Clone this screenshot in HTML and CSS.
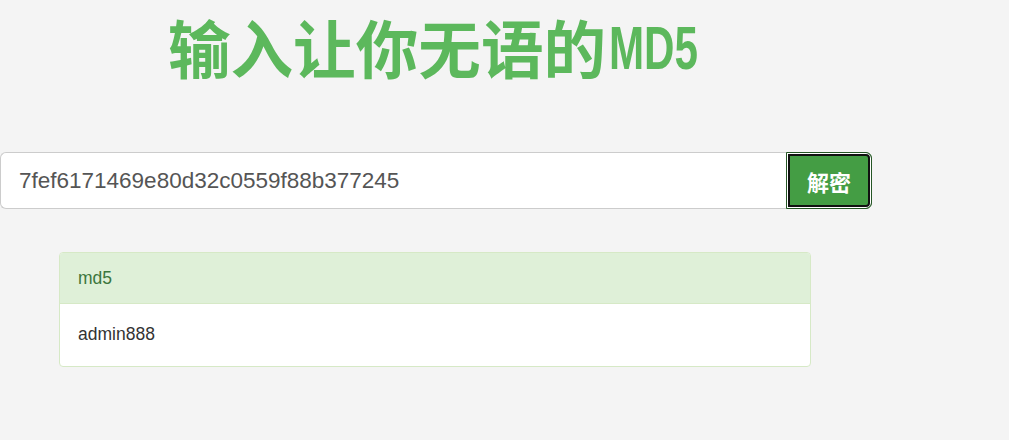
FILE: index.html
```html
<!DOCTYPE html>
<html lang="zh-CN">
<head>
<meta charset="utf-8">
<title>输入让你无语的MD5</title>
<link rel="stylesheet" href="styles.css">
</head>
<body>
<div class="container">
  <h1 class="title">输入让你无语的<svg class="latin" width="90" height="50" viewBox="0 0 90 50"><text x="0" y="48" textLength="89" lengthAdjust="spacingAndGlyphs">MD5</text></svg></h1>
  <form class="search">
    <input class="search-input" type="text" value="7fef6171469e80d32c0559f88b377245">
    <button class="search-btn" type="button">解密</button>
  </form>
  <div class="panel">
    <div class="panel-heading">md5</div>
    <div class="panel-body">admin888</div>
  </div>
</div>
</body>
</html>
```
FILE: styles.css
```css
html, body {
  margin: 0;
  padding: 0;
  background: #f4f4f4;
  font-family: "Liberation Sans", Arial, "Noto Sans CJK SC", sans-serif;
  color: #333;
}
.container {
  width: 872px;
}
.title {
  margin: 0;
  padding: 0 5px 0 0;
  height: 152px;
  box-sizing: border-box;
  text-align: center;
  font-family: "Noto Sans CJK SC", sans-serif;
  font-weight: 700;
  font-size: 62.6px;
  line-height: 91px;
  color: #5cb85c;
}
.title .latin {
  margin-left: 3px;
  vertical-align: 2px;
  overflow: visible;
}
.title .latin text {
  font-family: "Liberation Sans", Arial, sans-serif;
  font-weight: 700;
  font-size: 61px;
  fill: #5cb85c;
}
.search {
  display: flex;
  margin: 0;
  height: 57px;
}
.search-input {
  flex: 1;
  margin: 0;
  height: 57px;
  box-sizing: border-box;
  border: 1px solid #ccc;
  border-right: none;
  border-radius: 6px 0 0 6px;
  background: #fff;
  padding: 0 18px;
  font-family: "Liberation Sans", Arial, sans-serif;
  font-size: 22.5px;
  color: #555;
  outline: none;
}
.search-btn {
  width: 86px;
  height: 57px;
  margin: 0;
  box-sizing: border-box;
  border: 1px solid #255625;
  border-radius: 0 6px 6px 0;
  background: #449d44;
  box-shadow: inset 0 0 0 1px #fff, inset 0 0 0 3px #111;
  color: #fff;
  font-family: "Noto Sans CJK SC", sans-serif;
  font-weight: 700;
  font-size: 22px;
  padding: 0;
  cursor: pointer;
}
.panel {
  margin: 43px 0 0 59px;
  width: 752px;
  box-sizing: border-box;
  border: 1px solid #d6e9c6;
  border-radius: 4px;
  background: #fff;
  overflow: hidden;
  font-size: 17.5px;
}
.panel-heading {
  background: #dff0d8;
  color: #3c763d;
  padding: 13px 18px 12px;
  line-height: 25px;
  border-bottom: 1px solid #d6e9c6;
}
.panel-body {
  padding: 18px 18px 19px;
  line-height: 25px;
  color: #333;
}
```
